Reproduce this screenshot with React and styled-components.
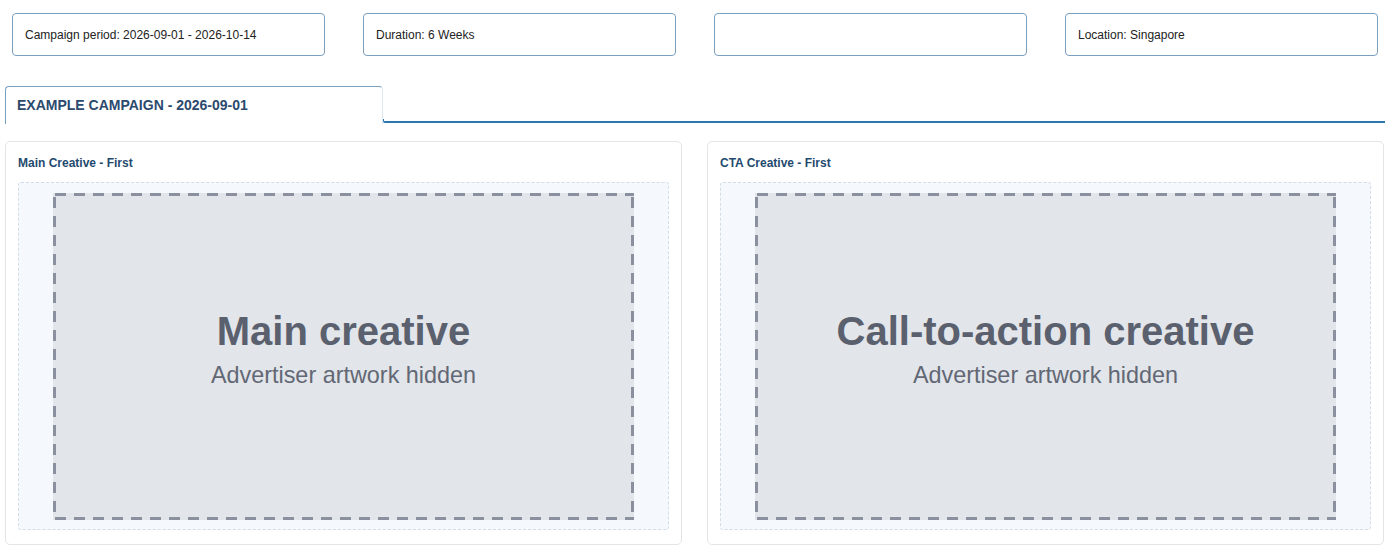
import React from 'react'
import styled, { createGlobalStyle } from 'styled-components'

const Global = createGlobalStyle`
  html, body {
    margin: 0;
    padding: 0;
    background: #ffffff;
    font-family: "Liberation Sans", Arial, sans-serif;
  }
`

const Page = styled.div`
  width: 1400px;
  height: 546px;
  overflow: hidden;
  box-sizing: border-box;
  padding: 13px 15px 0 5px;
`

const InfoRow = styled.div`
  display: grid;
  grid-template-columns: repeat(4, 313px);
  column-gap: 38px;
  margin-left: 7px;
`

const InfoBox = styled.div`
  height: 43px;
  box-sizing: border-box;
  border: 1px solid #7a9fbf;
  border-radius: 4px;
  padding: 0 12px;
  display: flex;
  align-items: center;
  font-size: 12px;
  color: #222;
`

const TabBar = styled.div`
  display: flex;
  align-items: flex-end;
  margin-top: 30px;
  height: 38px;
`

const Tab = styled.div`
  width: 378px;
  height: 38px;
  box-sizing: border-box;
  border: 1px solid #7a9fbf;
  border-right-color: #dfe8ef;
  border-bottom: none;
  border-radius: 4px 4px 0 0;
  padding: 0 11px 2px;
  display: flex;
  align-items: center;
  font-size: 14px;
  font-weight: bold;
  color: #2b4a6d;
`

const TabLine = styled.div`
  flex: 1;
  height: 4px;
  box-sizing: border-box;
  border-bottom: 2px solid #2b78b0;
  border-left: 1px solid #2b78b0;
  border-radius: 0 0 0 2px;
  margin-bottom: 1px;
`

const Panels = styled.div`
  display: grid;
  grid-template-columns: 677px 677px;
  column-gap: 25px;
  margin-top: 17px;
`

const Panel = styled.div`
  height: 404px;
  box-sizing: border-box;
  border: 1px solid #e3e5e8;
  border-radius: 5px;
  padding: 14px 12px 14px 12px;
  display: flex;
  flex-direction: column;
`

const PanelTitle = styled.div`
  font-size: 12px;
  font-weight: bold;
  color: #1f4a6f;
  height: 14px;
  line-height: 14px;
  margin-bottom: 12px;
`

const Stage = styled.div`
  flex: 1;
  box-sizing: border-box;
  border: 1px dashed #d3dde6;
  border-radius: 3px;
  background: #f5f9fd;
  padding: 10px 0 9px;
  display: flex;
  justify-content: center;
`

const dash = '#8b909e'

const Placeholder = styled.div`
  height: 100%;
  aspect-ratio: 16 / 9;
  box-sizing: border-box;
  background-color: #e2e5e9;
  background-image:
    repeating-linear-gradient(90deg, ${dash} 0 11px, transparent 11px 19px),
    repeating-linear-gradient(90deg, ${dash} 0 11px, transparent 11px 19px),
    repeating-linear-gradient(180deg, ${dash} 0 11px, transparent 11px 19px),
    repeating-linear-gradient(180deg, ${dash} 0 11px, transparent 11px 19px);
  background-size: 100% 3px, 100% 3px, 3px 100%, 3px 100%;
  background-position: 2px 0, 2px 100%, 0 4px, 100% 4px;
  background-repeat: no-repeat;
  display: flex;
  flex-direction: column;
  align-items: center;
  justify-content: center;
  color: #5a606d;
  padding-bottom: 15px;
`

const BigLabel = styled.div`
  font-size: 40px;
  font-weight: bold;
  line-height: 46px;
  margin-bottom: 6px;
`

const SubLabel = styled.div`
  font-size: 23.4px;
  line-height: 30px;
  color: #626875;
`

const infos = [
  'Campaign period: 2026-09-01 - 2026-10-14',
  'Duration: 6 Weeks',
  '',
  'Location: Singapore',
]

const creatives = [
  { title: 'Main Creative - First', label: 'Main creative' },
  { title: 'CTA Creative - First', label: 'Call-to-action creative' },
]

export default function App() {
  return (
    <>
      <Global />
      <Page>
        <InfoRow>
          {infos.map((t, i) => (
            <InfoBox key={i}>{t}</InfoBox>
          ))}
        </InfoRow>
        <TabBar>
          <Tab>EXAMPLE CAMPAIGN - 2026-09-01</Tab>
          <TabLine />
        </TabBar>
        <Panels>
          {creatives.map((c) => (
            <Panel key={c.title}>
              <PanelTitle>{c.title}</PanelTitle>
              <Stage>
                <Placeholder>
                  <BigLabel>{c.label}</BigLabel>
                  <SubLabel>Advertiser artwork hidden</SubLabel>
                </Placeholder>
              </Stage>
            </Panel>
          ))}
        </Panels>
      </Page>
    </>
  )
}
